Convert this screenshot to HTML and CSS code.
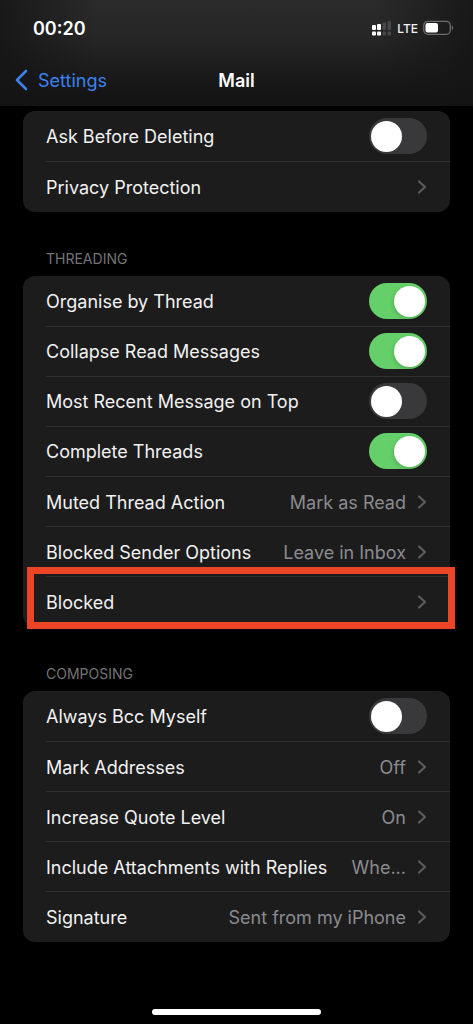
FILE: index.html
```html
<!DOCTYPE html>
<html lang="en">

<head>
  <meta charset="UTF-8">
  <meta name="viewport" content="width=device-width, initial-scale=1.0">
  <title>Mail</title>
  <link rel="stylesheet" href="styles.css">
</head>

<body>
  <svg class="sprite" width="0" height="0" aria-hidden="true">
    <symbol id="chevron" viewBox="0 0 10 16">
      <path d="M2 2.5 L8 8 L2 13.5" fill="none" stroke="currentColor" stroke-width="2.2" stroke-linecap="round" stroke-linejoin="round"/>
    </symbol>
  </svg>

  <header class="header">
    <div class="status-bar">
      <span class="time">00:20</span>
      <div class="status-icons">
        <svg class="signal" width="20" height="16" viewBox="0 0 20 16">
          <g fill="#fff">
            <rect x="0" y="5" width="4" height="5" rx="1"/>
            <rect x="5" y="4" width="4" height="6" rx="1"/>
            <rect x="0" y="11.5" width="4" height="4" rx="1"/>
            <rect x="5" y="11.5" width="4" height="4" rx="1"/>
          </g>
          <g fill="#48484a">
            <rect x="10.5" y="2.500" width="3.5" height="7.5" rx="1"/>
            <rect x="15.5" y="1" width="3.5" height="9" rx="1"/>
            <rect x="10.5" y="11.5" width="3.5" height="4" rx="1"/>
            <rect x="15.5" y="11.5" width="3.5" height="4" rx="1"/>
          </g>
        </svg>
        <span class="network">LTE</span>
        <svg class="battery" width="31" height="16" viewBox="0 0 31 16">
          <rect x="0.8" y="1.3" width="26.5" height="13" rx="4" fill="none" stroke="#6c6c6e" stroke-width="1.3"/>
          <rect x="2.5" y="3" width="12.5" height="9.6" rx="2" fill="#fff"/>
          <path d="M28.8 5.5 C30.6 6.1 30.6 9.5 28.8 10.1 Z" fill="#6c6c6e"/>
        </svg>
      </div>
    </div>
    <nav class="nav-bar">
      <a class="back" href="#">
        <svg width="14" height="22" viewBox="0 0 14 22">
          <path d="M12 2 L3 11 L12 20" fill="none" stroke="currentColor" stroke-width="2.6" stroke-linecap="round" stroke-linejoin="round"/>
        </svg>
        Settings
      </a>
      <h1>Mail</h1>
    </nav>
  </header>

  <main class="settings">
    <ul class="group">
      <li class="row">
        <label for="ask">Ask Before Deleting</label>
        <input class="switch" type="checkbox" id="ask">
      </li>
      <li class="row">
        <a href="#">Privacy Protection <svg class="chevron"><use href="#chevron"/></svg></a>
      </li>
    </ul>

    <h2>THREADING</h2>
    <ul class="group">
      <li class="row">
        <label for="organise">Organise by Thread</label>
        <input class="switch" type="checkbox" id="organise" checked>
      </li>
      <li class="row">
        <label for="collapse">Collapse Read Messages</label>
        <input class="switch" type="checkbox" id="collapse" checked>
      </li>
      <li class="row">
        <label for="recent">Most Recent Message on Top</label>
        <input class="switch" type="checkbox" id="recent">
      </li>
      <li class="row">
        <label for="complete">Complete Threads</label>
        <input class="switch" type="checkbox" id="complete" checked>
      </li>
      <li class="row">
        <a href="#">Muted Thread Action <span class="value">Mark as Read</span><svg class="chevron"><use href="#chevron"/></svg></a>
      </li>
      <li class="row">
        <a href="#">Blocked Sender Options <span class="value">Leave in Inbox</span><svg class="chevron"><use href="#chevron"/></svg></a>
      </li>
      <li class="row highlight">
        <a href="#">Blocked <svg class="chevron"><use href="#chevron"/></svg></a>
      </li>
    </ul>

    <h2>COMPOSING</h2>
    <ul class="group">
      <li class="row">
        <label for="bcc">Always Bcc Myself</label>
        <input class="switch" type="checkbox" id="bcc">
      </li>
      <li class="row">
        <a href="#">Mark Addresses <span class="value">Off</span><svg class="chevron"><use href="#chevron"/></svg></a>
      </li>
      <li class="row">
        <a href="#">Increase Quote Level <span class="value">On</span><svg class="chevron"><use href="#chevron"/></svg></a>
      </li>
      <li class="row">
        <a href="#">Include Attachments with Replies <span class="value">Whe...</span><svg class="chevron"><use href="#chevron"/></svg></a>
      </li>
      <li class="row">
        <a href="#">Signature <span class="value">Sent from my iPhone</span><svg class="chevron"><use href="#chevron"/></svg></a>
      </li>
    </ul>
  </main>

  <div class="home-indicator"></div>
</body>

</html>
```
FILE: styles.css
```css
* {
  margin: 0;
  padding: 0;
  box-sizing: border-box;
}

body {
  display: flex;
  flex-direction: column;
  min-height: 100vh;
  background: #000;
  color: #f2f2f2;
  font-family: Inter, "Liberation Sans", sans-serif;
  font-size: 18px;
}

a {
  color: inherit;
  text-decoration: none;
}

.sprite {
  position: absolute;
}

/* header */

.header {
  height: 106px;
  background:
    linear-gradient(to right, rgba(20, 20, 20, 0.8), transparent 20%, transparent 80%, rgba(20, 20, 20, 0.8)),
    linear-gradient(#2a2a2b, #262627 35%, #141414 90%);
}

.status-bar {
  display: flex;
  justify-content: space-between;
  align-items: center;
  height: 56px;
  padding: 0 19px 0 33px;
}

.time {
  font-size: 18px;
  font-weight: 600;
  color: #fff;
}

.status-icons {
  display: flex;
  align-items: center;
  gap: 5px;
}

.network {
  font-size: 12px;
  font-weight: 500;
}

.nav-bar {
  display: grid;
  grid-template-columns: 1fr auto 1fr;
  align-items: center;
  height: 48px;
  padding: 0 14px;
}

.back {
  display: flex;
  align-items: center;
  gap: 10px;
  font-size: 18px;
  color: #3b82f0;
}

h1 {
  font-size: 18px;
  font-weight: 600;
  color: #fff;
}

/* settings list */

.settings {
  padding: 5px 23px 0;
}

.group {
  list-style: none;
  padding-bottom: 1px;
  background: #1c1c1d;
  border-radius: 12px;
}

h2 {
  height: 64px;
  padding: 37px 23px 0;
  font-size: 14px;
  font-weight: 400;
  line-height: 20px;
  color: #747477;
}

.row {
  position: relative;
  display: flex;
  align-items: center;
  height: 50px;
  padding-left: 23px;
}

.row label,
.row a {
  display: flex;
  flex: 1;
  align-items: center;
  align-self: stretch;
  white-space: nowrap;
}

.row a {
  padding: 2px 23px 0 0;
}

.row + .row::before {
  content: "";
  position: absolute;
  top: 0;
  left: 23px;
  right: 0;
  height: 1px;
  background: #303032;
}

.value {
  margin-left: auto;
  color: #8b8b8f;
}

.chevron {
  width: 10px;
  height: 16px;
  margin-left: auto;
  color: #5c5c5f;
}

.value + .chevron {
  margin-left: 11px;
}

.switch {
  appearance: none;
  display: flex;
  align-items: center;
  width: 58px;
  height: 36px;
  margin-right: 23px;
  padding: 0 2px;
  border-radius: 18px;
  background: #39393c;
}

.switch::before {
  content: "";
  width: 31px;
  height: 31px;
  border-radius: 50%;
  background: #fff;
}

.switch:checked {
  background: #65cf69;
}

.switch:checked::before {
  margin-left: auto;
  box-shadow: -1px 2px 4px rgba(0, 0, 0, 0.15);
}

.highlight::after {
  content: "";
  position: absolute;
  top: -9px;
  right: -5px;
  bottom: -3px;
  left: 4px;
  border: 7px solid #eb4427;
  pointer-events: none;
}

.home-indicator {
  width: 169px;
  height: 6px;
  margin: auto auto 9px;
  border-radius: 3px;
  background: #fff;
}
```
